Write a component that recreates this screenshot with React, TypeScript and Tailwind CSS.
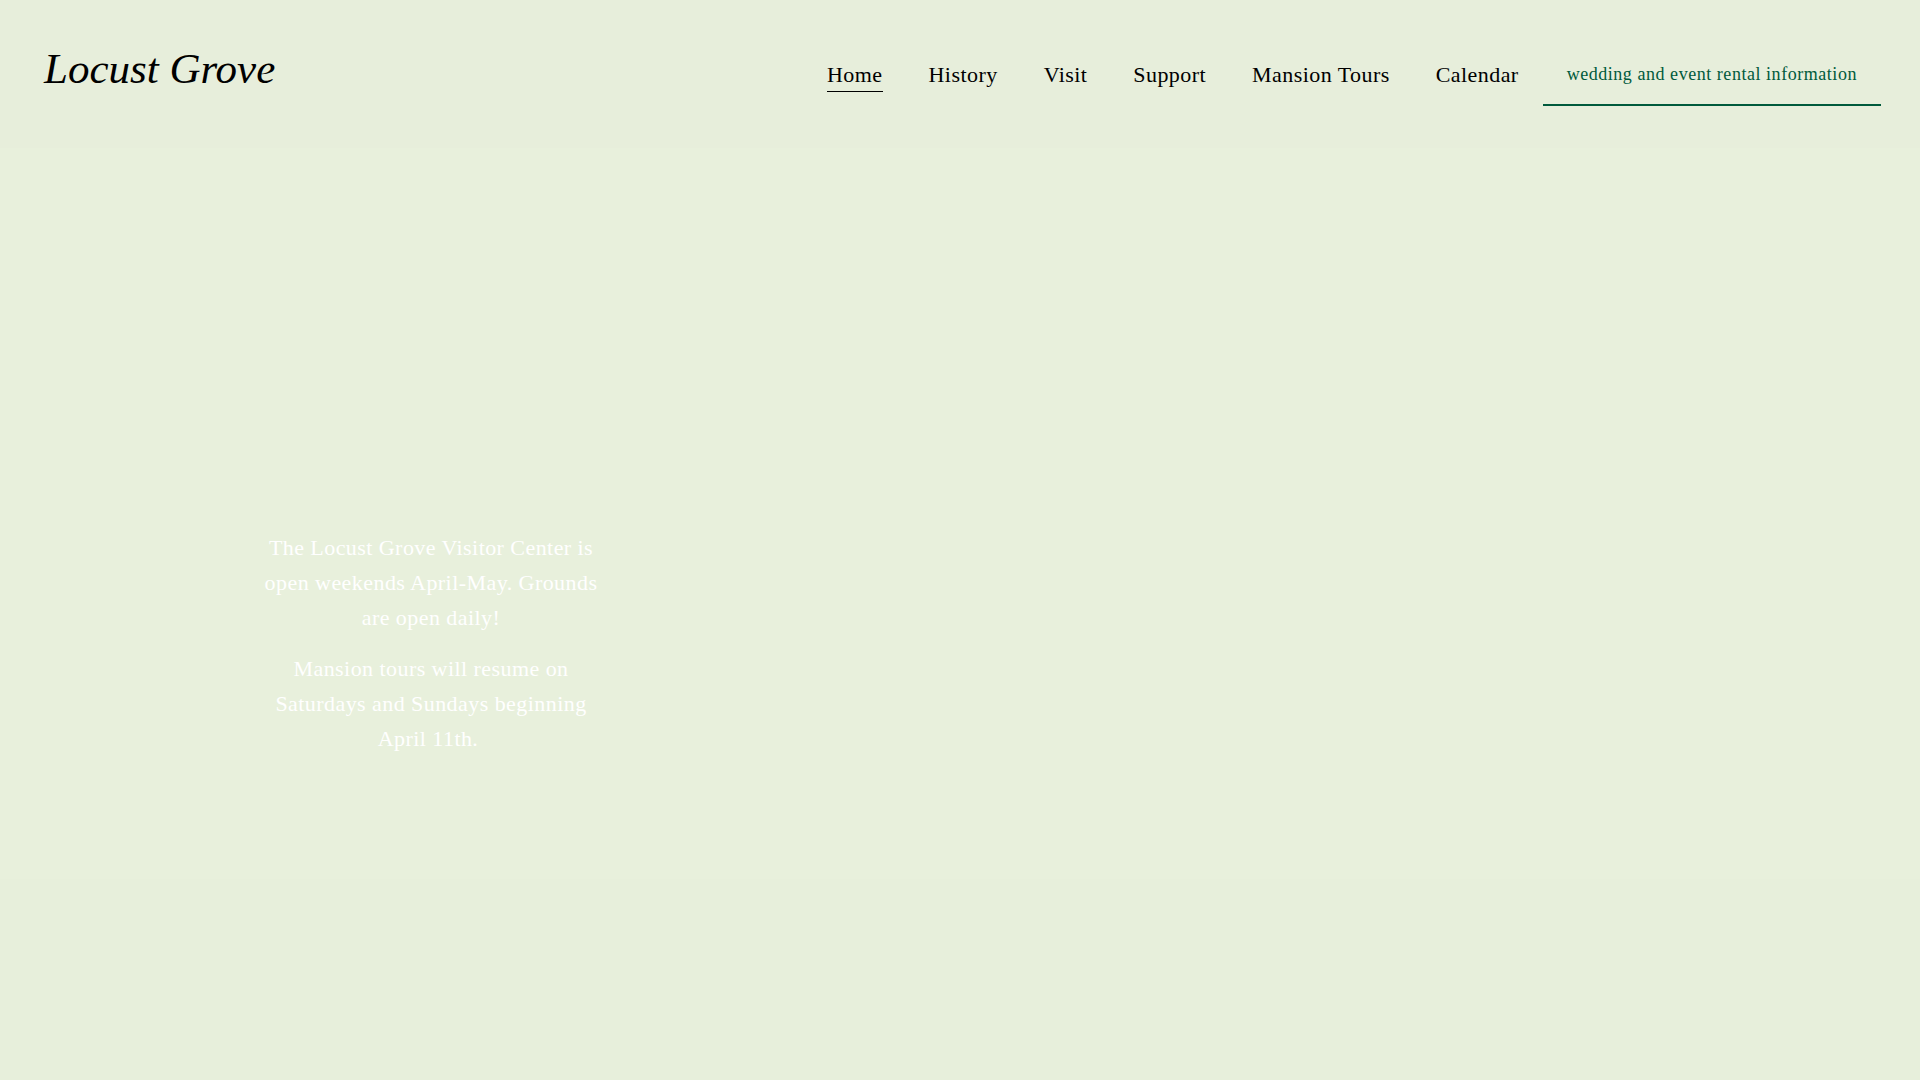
import React from "react";

type NavItem = {
  label: string;
  href: string;
  active?: boolean;
};

const navItems: NavItem[] = [
  { label: "Home", href: "#home", active: true },
  { label: "History", href: "#history" },
  { label: "Visit", href: "#visit" },
  { label: "Support", href: "#support" },
  { label: "Mansion Tours", href: "#mansion-tours" },
  { label: "Calendar", href: "#calendar" },
];

const Header: React.FC = () => {
  return (
    <header className="flex items-start justify-between bg-[#e7eedb] pt-11 pb-[42px] pl-11 pr-[39px]">
      <a
        href="#home"
        className="font-['Z003','URW_Chancery_L','Liberation_Serif',serif] text-[43px] italic leading-[50px] text-black"
      >
        Locust Grove
      </a>
      <div className="flex items-center gap-6">
        <nav aria-label="Main">
          <ul className="flex gap-[46px]">
            {navItems.map((item) => (
              <li key={item.label}>
                <a
                  href={item.href}
                  aria-current={item.active ? "page" : undefined}
                  className={
                    "block border-b text-[22px] leading-8 tracking-[0.02em] text-black " +
                    (item.active ? "border-black" : "border-transparent")
                  }
                >
                  {item.label}
                </a>
              </li>
            ))}
          </ul>
        </nav>
        <a
          href="#rentals"
          className="border-b-2 border-[#005a3c] px-6 py-4 text-lg leading-7 tracking-[0.03em] text-[#005a3c]"
        >
          wedding and event rental information
        </a>
      </div>
    </header>
  );
};

const App: React.FC = () => {
  return (
    <div className="min-h-screen bg-[#e7efdb] font-['Liberation_Serif',serif]">
      <Header />
      {/* Opening notice */}
      <main className="bg-[#e8f0dc] px-[250px] pt-[382px] pb-[123px]">
        <div className="flex w-[362px] flex-col gap-4 text-center text-[22px] leading-[35px] tracking-[0.02em] text-white">
          <p>
            The Locust Grove Visitor Center is open weekends April-May. Grounds
            are open daily!
          </p>
          <p>
            Mansion tours will resume on Saturdays and Sundays beginning April
            11th.&nbsp;
          </p>
        </div>
      </main>
    </div>
  );
};

export default App;
